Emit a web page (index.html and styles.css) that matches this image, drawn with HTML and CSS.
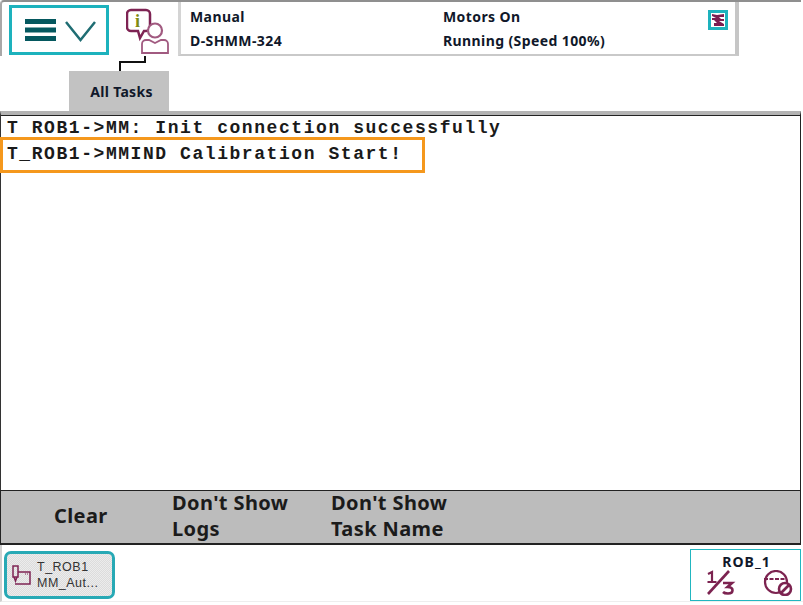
FILE: index.html
```html
<!DOCTYPE html>
<html lang="en">
<head>
<meta charset="utf-8">
<title>Task messages</title>
<link rel="stylesheet" href="styles.css">
</head>
<body>
<div class="screen">
  <header class="top">
    <button class="menu-btn" aria-label="Menu">
      <svg width="72" height="28" viewBox="0 0 72 28">
        <path d="M0 5.500h31M0 14h31M0 22.500h31" stroke="#05585f" stroke-width="5" fill="none"/>
        <path d="M41 6l14.500 18L70 6" stroke="#1f6d73" stroke-width="2.500" fill="none"/>
      </svg>
    </button>
    <svg class="event-icon" width="46" height="50" viewBox="0 0 46 50">
      <path d="M5 3h15a4 4 0 0 1 4 4v13a4 4 0 0 1-4 4h-2l-4 7-2-7H5a4 4 0 0 1-4-4V7a4 4 0 0 1 4-4z" fill="#fff" stroke="#7e2353" stroke-width="2.500"/>
      <text x="9" y="20" class="info-i">i</text>
      <circle cx="29" cy="23.500" r="7" fill="#fff" stroke="#a15a80" stroke-width="2.200"/>
      <path d="M16 46v-9a4 4 0 0 1 4-4h3l6 3 6-3h3a4 4 0 0 1 4 4v9z" fill="#fff" stroke="#a15a80" stroke-width="1.800"/>
    </svg>
    <section class="status">
      <div class="status-col col-a"><span>Manual</span><span>D-SHMM-324</span></div>
      <div class="status-col col-b"><span>Motors On</span><span>Running (Speed 100%)</span></div>
      <div class="robot-badge">
        <svg width="14" height="14" viewBox="0 0 14 14">
          <path d="M1 1l5 1 7-1v3H8l2 2h3v2H8l5 3v2H3v-3h3L3 7H1V5h4L1 3z" fill="#7c1d50"/>
        </svg>
      </div>
    </section>
  </header>
  <div class="tab-row">
    <svg class="tab-link" width="36" height="16" viewBox="0 0 36 16"><path d="M27 0v6H2v9" stroke="#111" stroke-width="2" fill="none"/></svg>
    <div class="tab">All Tasks</div>
  </div>
  <main class="log">
    <p class="line">T ROB1-&gt;MM: Init connection successfully</p>
    <p class="line">T_ROB1-&gt;MMIND Calibration Start!</p>
    <div class="highlight"></div>
  </main>
  <nav class="actions">
    <button class="action act-clear">Clear</button>
    <button class="action act-logs">Don't Show<br>Logs</button>
    <button class="action act-task">Don't Show<br>Task Name</button>
  </nav>
  <footer class="bottom">
    <button class="task-btn">
      <svg width="20" height="22" viewBox="0 0 20 22">
        <path d="M2 2h5v11H2zM3 13l1.500 4 1.500-4M7 8h12v12H4" fill="none" stroke="#7e2353" stroke-width="1.500"/>
        <path d="M14 10h1M16 10h1" stroke="#7e2353"/>
      </svg>
      <span class="task-text"><span>T_ROB1</span><span>MM_Aut...</span></span>
    </button>
    <div class="rob">
      <div class="rob-name">ROB_1</div>
      <div class="rob-icons">
        <svg width="30" height="26" viewBox="0 0 30 26">
          <path d="M2 24L23 1" stroke="#7c2350" stroke-width="2.600"/>
          <path d="M2 4l4-2v10M1.500 12h9" stroke="#7c2350" stroke-width="2.200" fill="none"/>
          <path d="M17 13h9l-4.500 4c3 0 5 1 5 3.300s-2 3.200-4.500 3.200-4-.5-5-1.500" stroke="#7c2350" stroke-width="2.600" fill="none"/>
        </svg>
        <svg width="30" height="26" viewBox="0 0 30 26">
          <circle cx="13" cy="12" r="11" fill="none" stroke="#7c2350" stroke-width="2.200"/>
          <path d="M1 9h23" stroke="#7c2350" stroke-width="2" stroke-dasharray="4 1.500"/>
          <circle cx="22" cy="19" r="6" fill="#fff" stroke="#7c2350" stroke-width="2.600"/>
          <path d="M18 23l8-8" stroke="#7c2350" stroke-width="2.600"/>
        </svg>
      </div>
    </div>
  </footer>
</div>
</body>
</html>
```
FILE: styles.css
```css
* { box-sizing: border-box; }
html, body { margin: 0; padding: 0; background: #fff; }
body { width: 803px; height: 605px; overflow: hidden; font-family: "Noto Sans", "Open Sans", sans-serif; color: #10182a; }
.screen { width: 803px; height: 605px; display: flex; flex-direction: column; }
button { font: inherit; color: inherit; letter-spacing: inherit; cursor: pointer; }

.top { height: 56px; display: flex; align-items: flex-start; border-top: 2px solid #8f8f8f; border-left: 2px solid #a8a8a8; margin-right: 2px; border-radius: 4px 0 0 0; }
.menu-btn { width: 100px; height: 50px; margin: 3px 0 0 7px; padding: 0 0 0 13px; border: 3px solid #1db2bd; background: #fff; display: flex; align-items: center; }
.event-icon { margin: 5px 0 0 17px; }
.status { width: 561px; height: 54px; margin-left: 6px; display: flex; position: relative; border-left: 3px solid #d4d4d4; border-right: 4px solid #c6c6c6; border-bottom: 2px solid #c9c9c9; font-size: 14px; font-weight: 700; letter-spacing: .4px; }
.status-col { display: flex; flex-direction: column; gap: 6px; padding-top: 6px; line-height: 18px; }
.col-a { width: 262px; padding-left: 9px; }
.col-b { width: 260px; }
.robot-badge { position: absolute; top: 8px; right: 7px; width: 20px; height: 20px; border: 3px solid #1db2bd; background: #fff; display: flex; align-items: center; justify-content: center; }
.robot-badge svg { width: 14px; height: 14px; }

.tab-row { height: 55px; position: relative; padding: 15px 0 0 69px; }
.tab-link { position: absolute; left: 118px; top: 0; }
.tab { width: 100px; height: 40px; padding-left: 5px; background: #c2c2c2; font-size: 14px; font-weight: 700; letter-spacing: .3px; text-align: center; line-height: 42px; }

.log { width: 801px; height: 379px; position: relative; background: #fff; border-top: 4px solid #b3b3b3; border-left: 1px solid #333; border-right: 1px solid #222; padding: 1px 0 0 6px; box-shadow: inset 0 1px 0 #222; font-family: "Liberation Mono", "Courier New", monospace; font-size: 18px; font-weight: 700; color: #1a1a1a; }
.line { margin: 0; height: 26px; line-height: 25px; letter-spacing: 1.56px; white-space: pre; }
.highlight { position: absolute; left: -1px; top: 22px; width: 425px; height: 36px; border: 3px solid #f5981d; }

.actions { width: 801px; height: 55px; display: flex; background: #bcbcbc; border: 1px solid #222; border-bottom-width: 2px; font-size: 20px; font-weight: 700; color: #1b1b1b; letter-spacing: .4px; }
.action { border: 0; background: none; padding: 0 0 2px; text-align: left; line-height: 26px; }
.act-clear { width: 171px; padding-left: 53px; }
.act-logs { width: 159px; height: 52px; margin-top: -1px; padding: 0; }
.act-task { width: 160px; height: 52px; margin-top: -1px; padding: 0; }

.bottom { flex: 1; display: flex; justify-content: space-between; align-items: flex-start; padding: 4px 2px 0 2px; border-left: 2px solid #d0d0d0; margin-bottom: 3px; border-bottom: 1px solid #eee; }
.task-btn { width: 111px; height: 48px; margin-top: 2px; padding: 0 0 0 4px; border: 3px solid #27a9b5; border-radius: 7px; background: repeating-conic-gradient(#ececec 0 25%, #dcdcdc 0 50%) 0 0 / 2px 2px; display: flex; align-items: center; gap: 6px; font-size: 12.500px; color: #333; text-align: left; }
.task-text { display: flex; flex-direction: column; line-height: 16px; font-family: "Liberation Sans", sans-serif; letter-spacing: .5px; }
.rob { width: 111px; height: 52px; border: 1px solid #21b6c0; display: flex; flex-direction: column; align-items: center; }
.rob-name { font-size: 14px; font-weight: 700; letter-spacing: 1px; line-height: 15px; height: 14px; margin-top: 4px; padding-left: 2px; }
.rob-icons { width: 100%; display: flex; justify-content: space-between; padding: 2px 7px 0 15px; }
.info-i { font: 700 18px "Liberation Serif", serif; fill: #7e8a12; }
```
